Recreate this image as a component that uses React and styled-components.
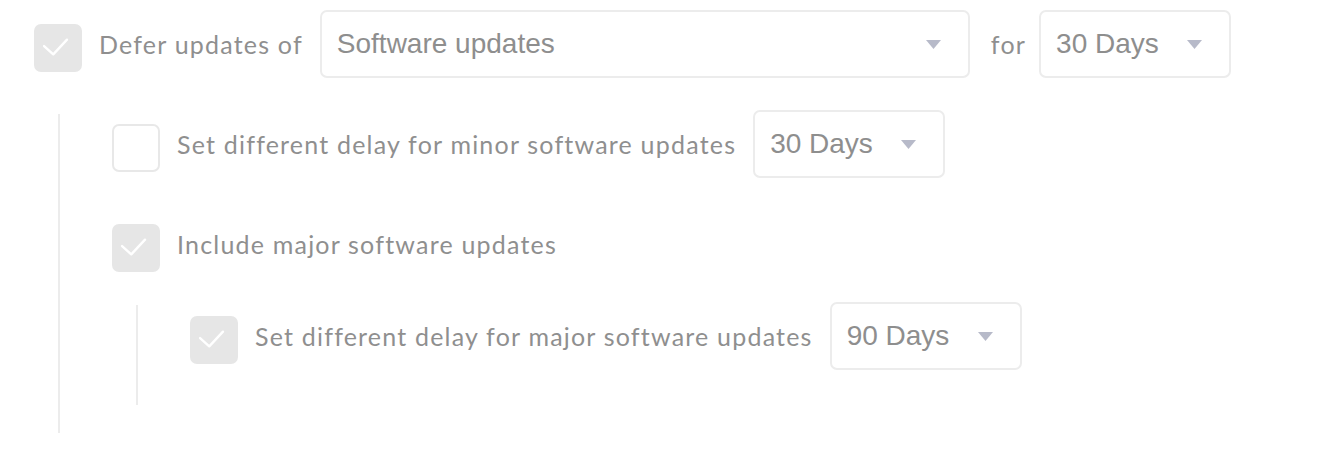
import React from 'react';
import styled, { createGlobalStyle } from 'styled-components';

const GlobalStyle = createGlobalStyle`
  body {
    margin: 0;
    background: #ffffff;
  }
`;

const Page = styled.div`
  padding: 24px 0 0 34px;
  font-family: Lato, "Liberation Sans", sans-serif;
`;

const Row = styled.div`
  display: flex;
  align-items: center;
  height: 48px;
  margin-top: ${p => p.$top || 0}px;
`;

const Box = styled.div`
  flex: none;
  box-sizing: border-box;
  width: 48px;
  height: 48px;
  border-radius: 7px;
  background: ${p => (p.$checked ? '#e6e6e6' : '#ffffff')};
  border: 2px solid ${p => (p.$checked ? '#e6e6e6' : '#e8e8e8')};
  display: flex;
  align-items: center;
  justify-content: center;
  margin-right: 17px;
`;

const Label = styled.span`
  font-size: 25px;
  letter-spacing: 1.2px;
  color: #8f8f8f;
  white-space: nowrap;
  margin-bottom: 8px;
  margin-left: ${p => p.$left || 0}px;
  margin-right: ${p => p.$gap ?? 17}px;
`;

const Select = styled.div`
  flex: none;
  box-sizing: border-box;
  width: ${p => p.$width}px;
  height: 68px;
  margin-bottom: 8px;
  border: 2px solid #ececec;
  border-radius: 7px;
  display: flex;
  align-items: center;
  justify-content: space-between;
  padding: 0 27px 0 15px;
  font-family: "Liberation Sans", Arial, sans-serif;
  font-size: 28px;
  color: #8e8e8e;
`;

const Nested = styled.div`
  margin: ${p => p.$top}px 0 0 24px;
  border-left: 2px solid #ececec;
  padding: ${p => p.$pt}px 0 ${p => p.$pb}px 52px;
`;

const Check = () => (
  <svg width="48" height="48" viewBox="0 0 48 48" style={{ position: 'relative', left: -2, top: -1 }}>
    <path d="M11 23 L21 32 L36 16" fill="none" stroke="#ffffff" strokeWidth="2.6" strokeLinecap="round" strokeLinejoin="round" />
  </svg>
);

const Arrow = () => (
  <svg width="15" height="9" viewBox="0 0 15 9">
    <path d="M0 0 H15 L7.5 9 Z" fill="#b7bac9" />
  </svg>
);

const Checkbox = ({ checked }) => <Box $checked={checked}>{checked && <Check />}</Box>;

const Dropdown = ({ value, width }) => (
  <Select $width={width}>
    <span>{value}</span>
    <Arrow />
  </Select>
);

export default function App() {
  return (
    <>
      <GlobalStyle />
      <Page>
        <Row>
          <Checkbox checked />
          <Label $gap={17}>Defer updates of</Label>
          <Dropdown value="Software updates" width={650} />
          <Label $left={21} $gap={13}>for</Label>
          <Dropdown value="30 Days" width={192} />
        </Row>
        <Nested $top={42} $pt={10} $pb={28}>
          <Row>
            <Checkbox />
            <Label>Set different delay for minor software updates</Label>
            <Dropdown value="30 Days" width={192} />
          </Row>
          <Row $top={52}>
            <Checkbox checked />
            <Label>Include major software updates</Label>
          </Row>
          <Nested $top={33} $pt={11} $pb={41}>
            <Row>
              <Checkbox checked />
              <Label>Set different delay for major software updates</Label>
              <Dropdown value="90 Days" width={192} />
            </Row>
          </Nested>
        </Nested>
      </Page>
    </>
  );
}
